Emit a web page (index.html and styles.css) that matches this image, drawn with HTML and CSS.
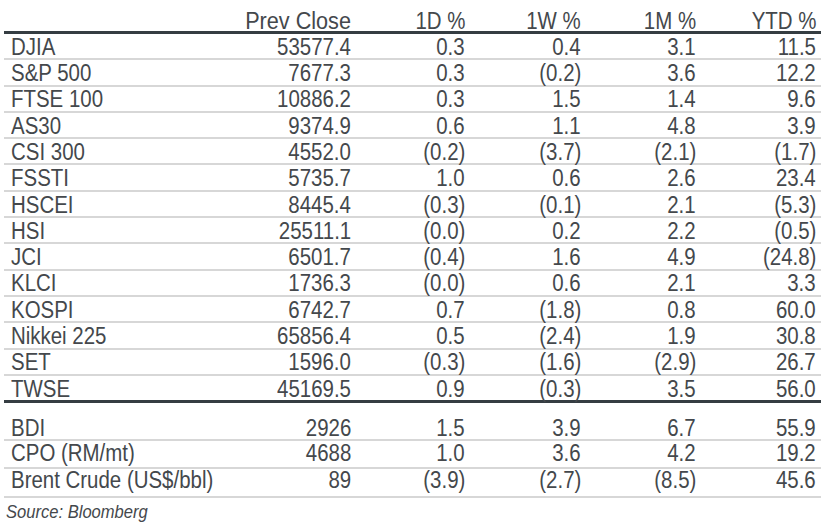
FILE: index.html
```html
<!DOCTYPE html>
<html>
<head>
<meta charset="utf-8">
<link rel="stylesheet" href="styles.css">
</head>
<body>
<div class="table">
  <div class="row head">
    <div class="c lbl"><span></span></div>
    <div class="c wide"><span>Prev Close</span></div>
    <div class="c"><span>1D %</span></div>
    <div class="c"><span>1W %</span></div>
    <div class="c"><span>1M %</span></div>
    <div class="c"><span>YTD %</span></div>
  </div>
  <div class="row"><div class="c lbl"><span>DJIA</span></div><div class="c"><span>53577.4</span></div><div class="c"><span>0.3</span></div><div class="c"><span>0.4</span></div><div class="c"><span>3.1</span></div><div class="c"><span>11.5</span></div></div>
  <div class="row"><div class="c lbl"><span>S&amp;P 500</span></div><div class="c"><span>7677.3</span></div><div class="c"><span>0.3</span></div><div class="c"><span>(0.2)</span></div><div class="c"><span>3.6</span></div><div class="c"><span>12.2</span></div></div>
  <div class="row"><div class="c lbl"><span>FTSE 100</span></div><div class="c"><span>10886.2</span></div><div class="c"><span>0.3</span></div><div class="c"><span>1.5</span></div><div class="c"><span>1.4</span></div><div class="c"><span>9.6</span></div></div>
  <div class="row"><div class="c lbl"><span>AS30</span></div><div class="c"><span>9374.9</span></div><div class="c"><span>0.6</span></div><div class="c"><span>1.1</span></div><div class="c"><span>4.8</span></div><div class="c"><span>3.9</span></div></div>
  <div class="row"><div class="c lbl"><span>CSI 300</span></div><div class="c"><span>4552.0</span></div><div class="c"><span>(0.2)</span></div><div class="c"><span>(3.7)</span></div><div class="c"><span>(2.1)</span></div><div class="c"><span>(1.7)</span></div></div>
  <div class="row"><div class="c lbl"><span>FSSTI</span></div><div class="c"><span>5735.7</span></div><div class="c"><span>1.0</span></div><div class="c"><span>0.6</span></div><div class="c"><span>2.6</span></div><div class="c"><span>23.4</span></div></div>
  <div class="row"><div class="c lbl"><span>HSCEI</span></div><div class="c"><span>8445.4</span></div><div class="c"><span>(0.3)</span></div><div class="c"><span>(0.1)</span></div><div class="c"><span>2.1</span></div><div class="c"><span>(5.3)</span></div></div>
  <div class="row"><div class="c lbl"><span>HSI</span></div><div class="c"><span>25511.1</span></div><div class="c"><span>(0.0)</span></div><div class="c"><span>0.2</span></div><div class="c"><span>2.2</span></div><div class="c"><span>(0.5)</span></div></div>
  <div class="row"><div class="c lbl"><span>JCI</span></div><div class="c"><span>6501.7</span></div><div class="c"><span>(0.4)</span></div><div class="c"><span>1.6</span></div><div class="c"><span>4.9</span></div><div class="c"><span>(24.8)</span></div></div>
  <div class="row"><div class="c lbl"><span>KLCI</span></div><div class="c"><span>1736.3</span></div><div class="c"><span>(0.0)</span></div><div class="c"><span>0.6</span></div><div class="c"><span>2.1</span></div><div class="c"><span>3.3</span></div></div>
  <div class="row"><div class="c lbl"><span>KOSPI</span></div><div class="c"><span>6742.7</span></div><div class="c"><span>0.7</span></div><div class="c"><span>(1.8)</span></div><div class="c"><span>0.8</span></div><div class="c"><span>60.0</span></div></div>
  <div class="row"><div class="c lbl"><span>Nikkei 225</span></div><div class="c"><span>65856.4</span></div><div class="c"><span>0.5</span></div><div class="c"><span>(2.4)</span></div><div class="c"><span>1.9</span></div><div class="c"><span>30.8</span></div></div>
  <div class="row"><div class="c lbl"><span>SET</span></div><div class="c"><span>1596.0</span></div><div class="c"><span>(0.3)</span></div><div class="c"><span>(1.6)</span></div><div class="c"><span>(2.9)</span></div><div class="c"><span>26.7</span></div></div>
  <div class="row last"><div class="c lbl"><span>TWSE</span></div><div class="c"><span>45169.5</span></div><div class="c"><span>0.9</span></div><div class="c"><span>(0.3)</span></div><div class="c"><span>3.5</span></div><div class="c"><span>56.0</span></div></div>
  <div class="row bdi"><div class="c lbl"><span>BDI</span></div><div class="c"><span>2926</span></div><div class="c"><span>1.5</span></div><div class="c"><span>3.9</span></div><div class="c"><span>6.7</span></div><div class="c"><span>55.9</span></div></div>
  <div class="row cpo"><div class="c lbl"><span>CPO (RM/mt)</span></div><div class="c"><span>4688</span></div><div class="c"><span>1.0</span></div><div class="c"><span>3.6</span></div><div class="c"><span>4.2</span></div><div class="c"><span>19.2</span></div></div>
  <div class="row brent"><div class="c lbl"><span>Brent Crude (US$/bbl)</span></div><div class="c"><span>89</span></div><div class="c"><span>(3.9)</span></div><div class="c"><span>(2.7)</span></div><div class="c"><span>(8.5)</span></div><div class="c"><span>45.6</span></div></div>
</div>
<div class="source"><span>Source: Bloomberg</span></div>
</body>
</html>
```
FILE: styles.css
```css
html, body {
  margin: 0;
  padding: 0;
  background: #ffffff;
}
body {
  width: 829px;
  height: 527px;
  overflow: hidden;
  font-family: "Liberation Sans", Arial, sans-serif;
  color: #44484c;
}
.table {
  margin-left: 4px;
  width: 817px;
}
.row {
  display: grid;
  grid-template-columns: 232px 120px 114px 116px 115px 120px;
  align-items: end;
  height: 24.3px;
  border-bottom: 2px solid #d7d7d7;
  font-size: 23.5px;
  line-height: 21.5px;
}
.row.head {
  height: 31px;
  border-bottom: 3px solid #353d42;
  line-height: 20.5px;
}
.row.last {
  border-bottom: 3px solid #353d42;
}
.row.bdi {
  height: 36px;
}
.row.cpo {
  height: 23.6px;
  padding-bottom: 2.4px;
}
.row.brent {
  height: 22.5px;
  padding-bottom: 4.5px;
}
.c {
  text-align: right;
  padding-right: 5px;
  white-space: nowrap;
}
.c span {
  display: inline-block;
  transform: scaleX(0.87);
  transform-origin: right bottom;
}
.c.wide span {
  transform: scaleX(0.92);
}
.c.lbl {
  text-align: left;
  padding-right: 0;
  padding-left: 7px;
}
.c.lbl span {
  transform-origin: left bottom;
}
.source {
  margin-top: 4px;
  padding-left: 6px;
  font-size: 18px;
  line-height: 20px;
  font-style: italic;
}
.source span {
  display: inline-block;
  transform: scaleX(0.92);
  transform-origin: left bottom;
}
```
